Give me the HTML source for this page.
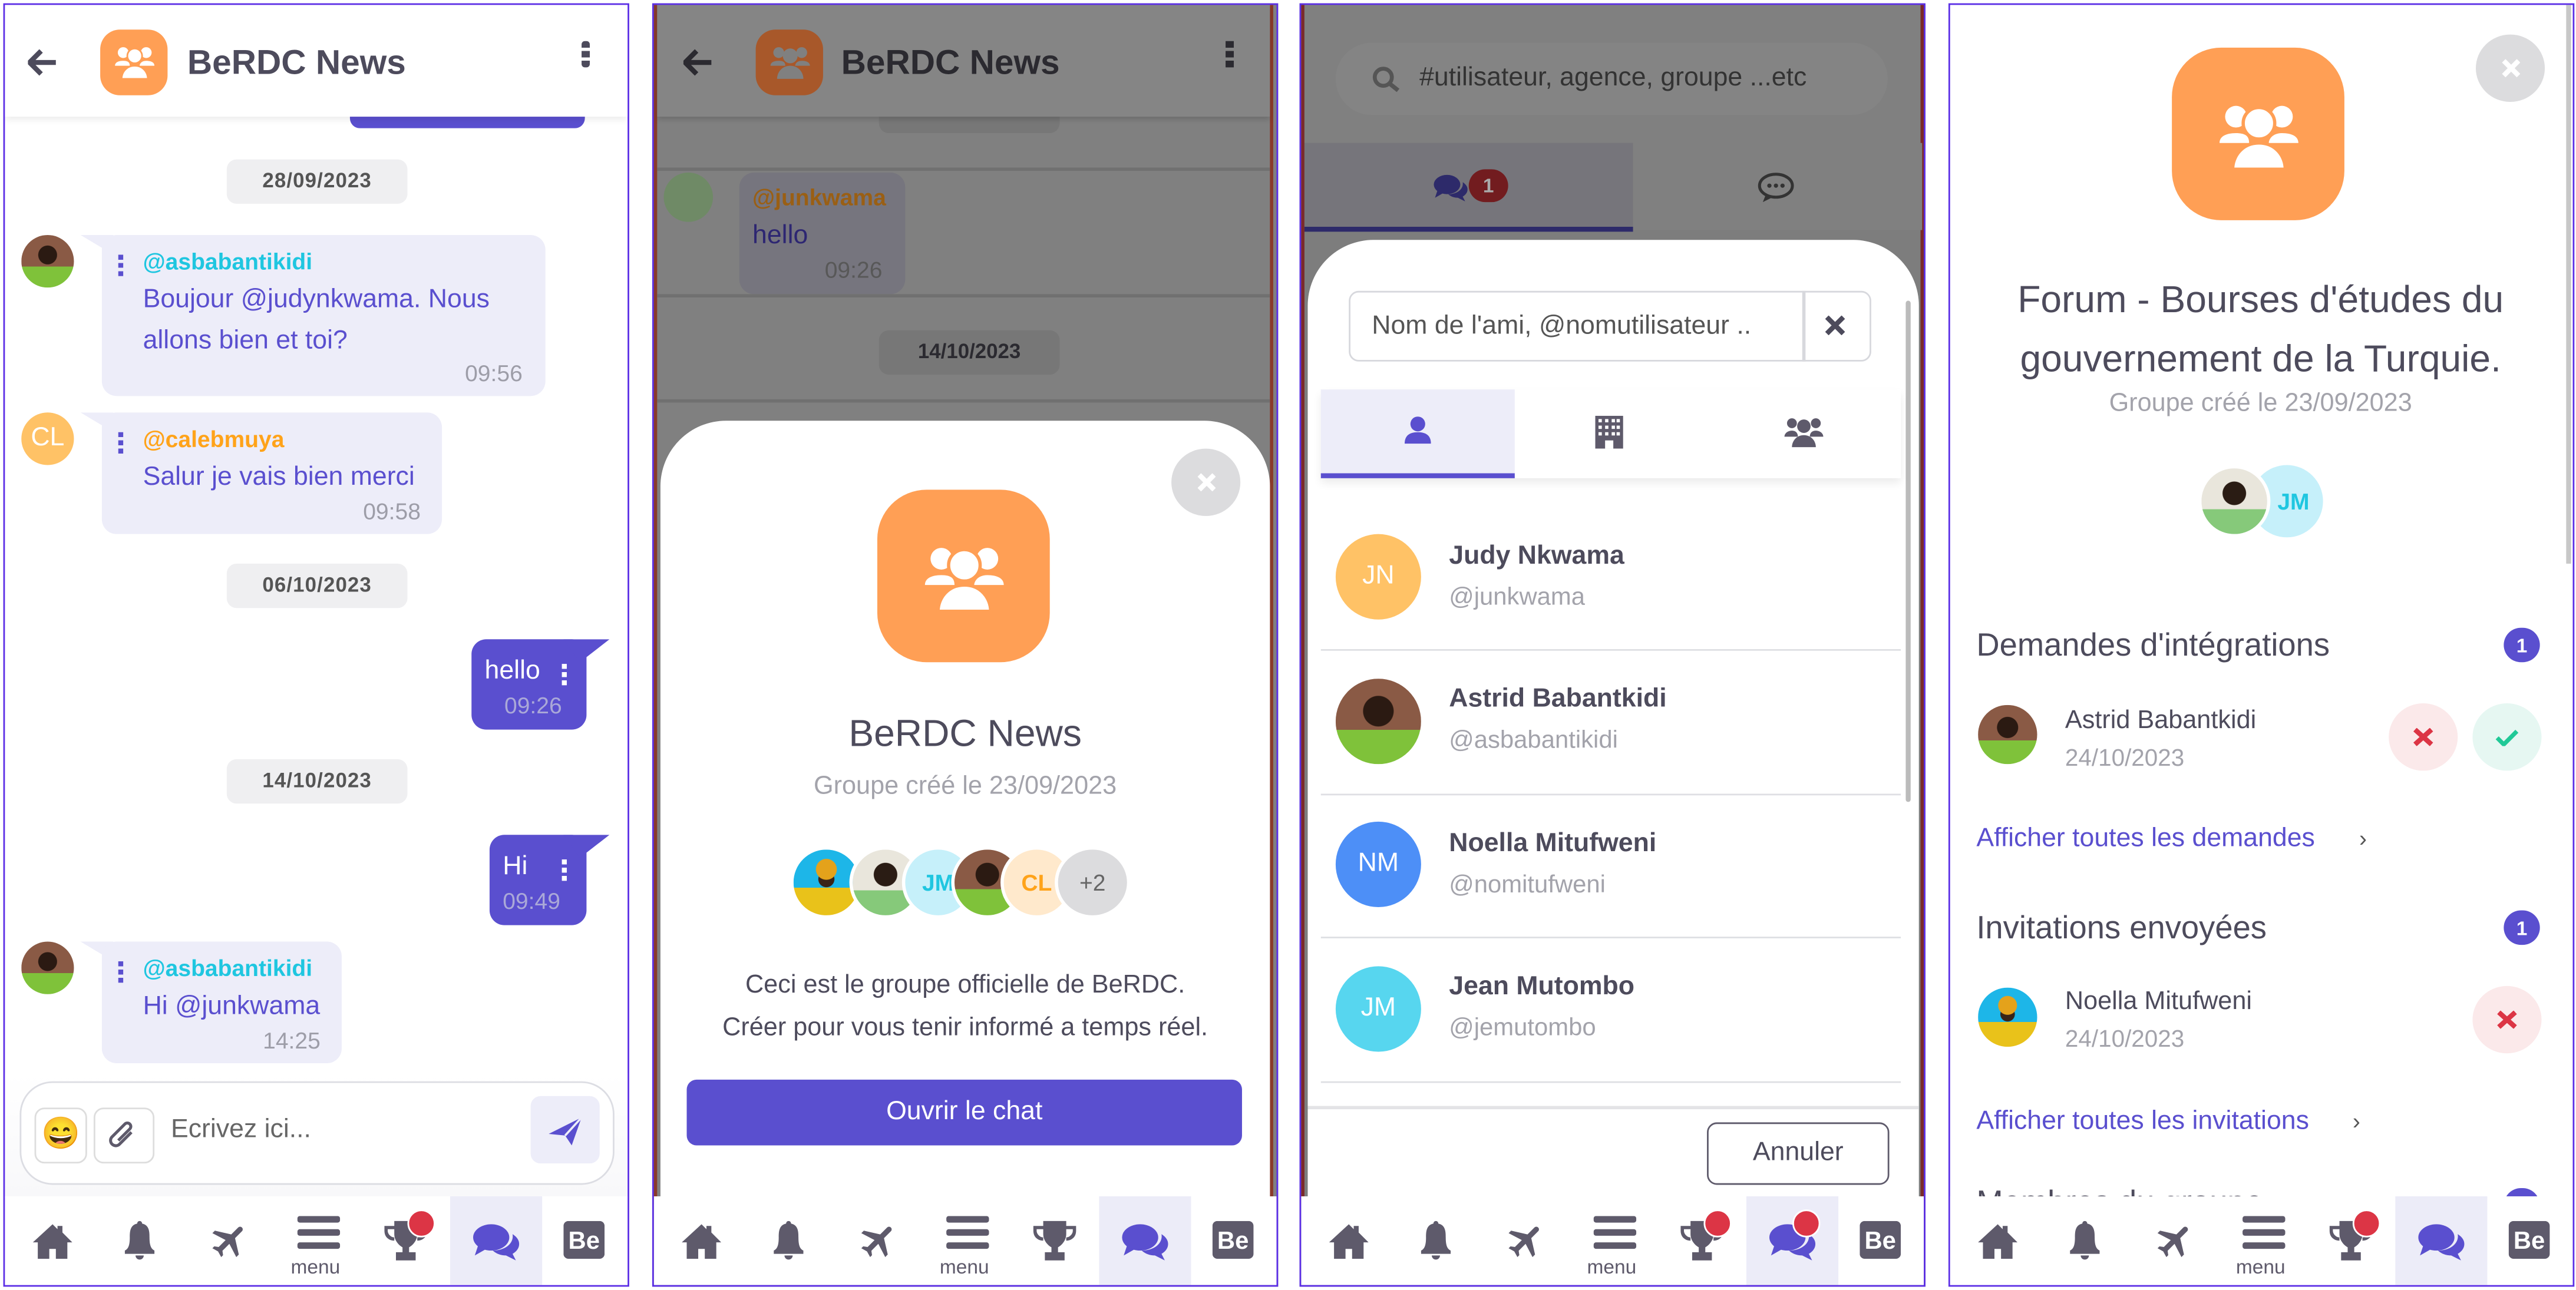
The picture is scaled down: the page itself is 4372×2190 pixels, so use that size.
<!DOCTYPE html>
<html><head><meta charset="utf-8">
<style>
*{box-sizing:border-box;margin:0;padding:0}
html,body{width:4372px;height:2190px;overflow:hidden;background:#fff}
#root{position:absolute;left:0;top:0;width:1568px;height:785px;transform:scale(2.7883,2.7898);transform-origin:0 0;font-family:"Liberation Sans",Arial,sans-serif}
.p{position:absolute;top:2px;width:381px;height:781px;border:1.5px solid #5b2ee6;overflow:hidden;background:#fff}
.a{position:absolute}
.nav{position:absolute;left:0;right:0;bottom:0;height:54px;background:#fff}
.nav svg{position:absolute;fill:#5e5a6b}
.dot{position:absolute;width:16px;height:16px;border-radius:50%;background:#dc3545}
.date{position:absolute;height:27px;width:110px;border-radius:6px;background:#efeff1;color:#555;font-weight:bold;font-size:12.5px;text-align:center;line-height:27px;letter-spacing:.4px}
.bub{position:absolute;background:#ededf9;border-radius:9px}
.kb{position:absolute;width:3px;height:13px;background:linear-gradient(#5a4fcf 0 3px,transparent 3px 5px,#5a4fcf 5px 8px,transparent 8px 10px,#5a4fcf 10px 13px)}
.un{position:absolute;font-weight:bold;font-size:14px}
.tx{position:absolute;color:#5a4fcf;font-size:16px;line-height:25px}
.tm{position:absolute;color:#9d9da8;font-size:14px}
.av{position:absolute;border-radius:50%;overflow:hidden}
.ph1{background:radial-gradient(circle at 50% 38%,#2b1a12 0 22%,transparent 23%),linear-gradient(#8a5a45 0 60%,#7fc23a 60%)}
.ph2{background:radial-gradient(circle at 50% 38%,#2a1c14 0 22%,transparent 23%),linear-gradient(#e9e6dc 0 62%,#86c97a 62%)}
.ph3{background:radial-gradient(circle at 50% 30%,#e4a21b 0 18%,transparent 19%),radial-gradient(circle at 50% 45%,#3a2418 0 16%,transparent 17%),linear-gradient(#1db6e8 0 58%,#e9c21a 58%)}
.ini{display:flex;align-items:center;justify-content:center;font-size:16px}
</style></head><body><div id="root">

<!-- ============ PANEL 1 ============ -->
<div class="p" style="left:2px">
 <div class="a" style="left:0;top:0;right:0;height:68px;background:#fff;box-shadow:0 2px 4px rgba(0,0,0,.08);z-index:2">
  <svg class="a" style="left:14px;top:27px" width="18" height="16" viewBox="0 0 18 16"><path d="M8 1 1 8l7 7M1 8h16" stroke="#4d4b5c" stroke-width="3" fill="none"/></svg>
  <div class="a" style="left:58px;top:15px;width:41px;height:40px;border-radius:12px;background:#ff9f55"></div>
  <svg class="a" style="left:66px;top:24px" width="26" height="22" viewBox="0 0 26 22" fill="#fff"><circle cx="6" cy="5" r="3.3"/><circle cx="20" cy="5" r="3.3"/><circle cx="13" cy="7" r="4.5" stroke="#ff9f55" stroke-width="1"/><path d="M1 13c0-2 2-3 5-3s4 1 4 3zM16 13c0-1 1-3 4-3s5 1 5 3z"/><path d="M5 21c0-4 3-8 8-8s8 4 8 8z" stroke="#ff9f55" stroke-width="1"/></svg>
  <div class="a" style="left:111px;top:24px;font-size:21px;font-weight:bold;color:#4d4b5c">BeRDC News</div>
  <div class="kb" style="left:351px;top:22px;width:5px;height:16px;background:linear-gradient(#4d4b5c 0 4px,transparent 4px 6px,#4d4b5c 6px 10px,transparent 10px 12px,#4d4b5c 12px 16px);border-radius:2px"></div>
 </div>
 <div class="a" style="left:210px;top:60px;width:143px;height:15px;background:#5a4fcf;border-radius:6px"></div>
 <div class="date" style="left:135px;top:94px">28/09/2023</div>
 <div class="av ph1" style="left:10px;top:140px;width:32px;height:32px"></div>
 <svg class="a" style="left:46px;top:140px" width="20" height="12"><path d="M0 0h20v12z" fill="#ededf9"/></svg>
 <div class="bub" style="left:59px;top:140px;width:270px;height:98px"></div>
 <div class="kb" style="left:69px;top:152px"></div>
 <div class="un" style="left:84px;top:148px;color:#1fc6e0">@asbabantikidi</div>
 <div class="tx" style="left:84px;top:167px">Boujour @judynkwama. Nous<br>allons bien et toi?</div>
 <div class="tm" style="left:280px;top:216px">09:56</div>

 <div class="av ini" style="left:10px;top:248px;width:32px;height:32px;background:#ffc266;color:#fff">CL</div>
 <svg class="a" style="left:46px;top:248px" width="20" height="12"><path d="M0 0h20v12z" fill="#ededf9"/></svg>
 <div class="bub" style="left:59px;top:248px;width:207px;height:74px"></div>
 <div class="kb" style="left:69px;top:260px"></div>
 <div class="un" style="left:84px;top:256px;color:#ffa31a">@calebmuya</div>
 <div class="tx" style="left:84px;top:275px">Salur je vais bien merci</div>
 <div class="tm" style="left:218px;top:300px">09:58</div>

 <div class="date" style="left:135px;top:340px">06/10/2023</div>
 <div class="bub" style="left:284px;top:386px;width:70px;height:55px;background:#5a4fcf"></div>
 <svg class="a" style="left:340px;top:386px" width="28" height="14"><path d="M0 0h28L10 14z" fill="#5a4fcf"/></svg>
 <div class="a" style="left:292px;top:397px;color:#fff;font-size:16px">hello</div>
 <div class="kb" style="left:339px;top:401px;background:linear-gradient(#fff 0 3px,transparent 3px 5px,#fff 5px 8px,transparent 8px 10px,#fff 10px 13px)"></div>
 <div class="a" style="left:304px;top:418px;color:#aaa8d8;font-size:14px">09:26</div>

 <div class="date" style="left:135px;top:459px">14/10/2023</div>
 <div class="bub" style="left:295px;top:505px;width:59px;height:55px;background:#5a4fcf"></div>
 <svg class="a" style="left:340px;top:505px" width="28" height="14"><path d="M0 0h28L10 14z" fill="#5a4fcf"/></svg>
 <div class="a" style="left:303px;top:516px;color:#fff;font-size:16px">Hi</div>
 <div class="kb" style="left:339px;top:520px;background:linear-gradient(#fff 0 3px,transparent 3px 5px,#fff 5px 8px,transparent 8px 10px,#fff 10px 13px)"></div>
 <div class="a" style="left:303px;top:537px;color:#aaa8d8;font-size:14px">09:49</div>

 <div class="av ph1" style="left:10px;top:570px;width:32px;height:32px"></div>
 <svg class="a" style="left:46px;top:570px" width="20" height="12"><path d="M0 0h20v12z" fill="#ededf9"/></svg>
 <div class="bub" style="left:59px;top:570px;width:146px;height:74px"></div>
 <div class="kb" style="left:69px;top:582px"></div>
 <div class="un" style="left:84px;top:578px;color:#1fc6e0">@asbabantikidi</div>
 <div class="tx" style="left:84px;top:597px">Hi @junkwama</div>
 <div class="tm" style="left:157px;top:622px">14:25</div>

 <div class="a" style="left:0;right:0;top:650px;height:76px;background:linear-gradient(#fff,#f8f8fa)"></div>
 <div class="a" style="left:9px;top:655px;width:362px;height:63px;border:1.5px solid #dcdde3;border-radius:20px;background:#fff"></div>
 <div class="a" style="left:18px;top:671px;width:32px;height:34px;border:1px solid #ddd;border-radius:6px;text-align:center;line-height:32px;font-size:19px">😄</div>
 <div class="a" style="left:54px;top:671px;width:37px;height:34px;border:1px solid #ddd;border-radius:6px"></div>
 <svg class="a" style="left:61px;top:677px" width="22" height="22" viewBox="0 0 22 22"><path d="M16 9 9 16a3 3 0 0 1-5-4l8-8a2 2 0 0 1 3 3l-7 7" stroke="#5e5a6b" stroke-width="1.8" fill="none"/></svg>
 <div class="a" style="left:101px;top:676px;font-size:16px;color:#666">Ecrivez ici...</div>
 <div class="a" style="left:320px;top:664px;width:42px;height:41px;border-radius:6px;background:#ededf9"></div>
 <svg class="a" style="left:330px;top:675px" width="22" height="20" viewBox="0 0 22 20"><path d="M1 12 21 2l-6 17-4-6z" fill="#5a4fcf"/><path d="M11 13 21 2" stroke="#ededf9" stroke-width="1.3"/></svg>

 <div class="nav">
  <svg style="left:16px;top:16px" width="26" height="22" viewBox="0 0 26 22"><path d="M13 1 1 12h3v10h7v-6h4v6h7V12h3L19 6V2h-3v2z"/></svg>
  <svg style="left:71px;top:14px" width="22" height="26" viewBox="0 0 22 26"><path d="M11 1c1 0 1.5.8 1.5 1.6C17 3.5 17 8 17 11c0 5 1 7 3 8v2H2v-2c2-1 3-3 3-8 0-3 0-7.5 4.5-8.4C9.5 1.8 10 1 11 1zM8.5 22h5a2.5 2.5 0 0 1-5 0z"/></svg>
  <svg style="left:124px;top:14px" width="26" height="26" viewBox="0 0 24 24"><path transform="rotate(45 12 12)" d="M21 16v-2l-8-5V3.5a1.5 1.5 0 0 0-3 0V9l-8 5v2l8-2.5V19l-2 1.5V22l3.5-1 3.5 1v-1.5L13 19v-5.5z"/></svg>
  <svg style="left:178px;top:12px" width="26" height="20" viewBox="0 0 26 20"><rect y="0" width="26" height="4" rx="1.5"/><rect y="8" width="26" height="4" rx="1.5"/><rect y="16" width="26" height="4" rx="1.5"/></svg>
  <div class="a" style="left:174px;top:36px;font-size:12px;color:#5e5a6b">menu</div>
  <svg style="left:230px;top:14px" width="28" height="26" viewBox="0 0 28 26"><path d="M7 1h14v8c0 4-3 7-5 8v3h4v5H8v-5h4v-3c-2-1-5-4-5-8zM7 4H1v3c0 4 3 6 6 6v-2c-2 0-4-2-4-4V6h4zM21 4h6v3c0 4-3 6-6 6v-2c2 0 4-2 4-4V6h-4z"/></svg>
  <div class="dot" style="left:245px;top:8px;width:17px;height:17px;border:1.5px solid #fff"></div>
  <div class="a" style="left:271px;top:0;width:56px;height:54px;background:#ececf8"></div>
  <svg style="left:284px;top:16px;fill:#5a4fcf" width="30" height="24" viewBox="0 0 30 24"><ellipse cx="12" cy="9" rx="11" ry="8"/><path d="M4 14 2 20l7-4z"/><path d="M25 7c3 2 4 4 4 6 0 2.5-1.5 4.5-4 6l2 4-6-3c-3 0-6-1-8-3 7 0 13-4 12-10z"/></svg>
  <svg style="left:340px;top:15px" width="25" height="23" viewBox="0 0 25 23"><rect width="25" height="23" rx="3"/><text x="12.5" y="17" font-family="Liberation Sans" font-weight="bold" font-size="15" fill="#fff" text-anchor="middle">Be</text></svg>
 </div>
</div>

<!-- ============ PANEL 2 ============ -->
<div class="p" style="left:397px;background:#808080">
 <div class="a" style="left:0;top:0;width:2px;height:730px;background:#8a3a2a"></div>
 <div class="a" style="right:2px;top:0;width:2px;height:730px;background:#8a3a2a"></div>
 <div class="a" style="left:137px;top:56px;width:110px;height:22px;border-radius:6px;background:#777"></div>
 <div class="a" style="left:2px;right:4px;top:0;height:68px;background:#858585;box-shadow:0 2px 3px rgba(0,0,0,.15)">
  <svg class="a" style="left:16px;top:27px" width="18" height="16" viewBox="0 0 18 16"><path d="M8 1 1 8l7 7M1 8h16" stroke="#2b2a30" stroke-width="3" fill="none"/></svg>
  <div class="a" style="left:60px;top:15px;width:41px;height:40px;border-radius:12px;background:#a8582a"></div>
  <svg class="a" style="left:68px;top:24px" width="26" height="22" viewBox="0 0 26 22" fill="#808080"><circle cx="6" cy="5" r="3.3"/><circle cx="20" cy="5" r="3.3"/><circle cx="13" cy="7" r="4.5"/><path d="M5 21c0-4 3-8 8-8s8 4 8 8z"/><path d="M1 13c0-2 2-3 5-3s4 1 4 3zM16 13c0-1 1-3 4-3s5 1 5 3z"/></svg>
  <div class="a" style="left:112px;top:24px;font-size:21px;font-weight:bold;color:#2b2a30">BeRDC News</div>
  <div class="a" style="left:346px;top:22px;width:5px;height:16px;background:linear-gradient(#2b2a30 0 4px,transparent 4px 6px,#2b2a30 6px 10px,transparent 10px 12px,#2b2a30 12px 16px)"></div>
 </div>
 <div class="a" style="left:2px;right:4px;top:99px;height:1.5px;background:#707070"></div>
 <div class="a" style="left:6px;top:102px;width:30px;height:30px;border-radius:50%;background:#6f8a66"></div>
 <div class="a" style="left:52px;top:102px;width:101px;height:74px;border-radius:9px;background:#76757e"></div>
 <div class="a" style="left:60px;top:109px;color:#9a5f14;font-weight:bold;font-size:14px">@junkwama</div>
 <div class="a" style="left:60px;top:132px;color:#2d2672;font-size:16px">hello</div>
 <div class="a" style="left:104px;top:153px;color:#585858;font-size:14px">09:26</div>
 <div class="a" style="left:2px;right:4px;top:176px;height:1.5px;background:#707070"></div>
 <div class="a" style="left:137px;top:198px;width:110px;height:27px;border-radius:6px;background:#777;color:#2b2a30;font-weight:bold;font-size:12.5px;text-align:center;line-height:27px">14/10/2023</div>
 <div class="a" style="left:2px;right:4px;top:240px;height:1.5px;background:#707070"></div>

 <div class="a" style="left:4px;top:253px;width:371px;height:480px;background:#fff;border-radius:40px 40px 0 0"></div>
 <div class="a" style="left:315px;top:270px;width:42px;height:41px;border-radius:50%;background:#dcdcde"></div>
 <svg class="a" style="left:331px;top:285px" width="11" height="11"><path d="M1 1l9 9M10 1l-9 9" stroke="#fff" stroke-width="3"/></svg>
 <div class="a" style="left:136px;top:295px;width:105px;height:105px;border-radius:30px;background:#ff9f55"></div>
 <svg class="a" style="left:163px;top:327px" width="52" height="44" viewBox="0 0 26 22" fill="#fff"><circle cx="6" cy="5" r="3.3"/><circle cx="20" cy="5" r="3.3"/><path d="M1 13c0-2 2-3 5-3s4 1 4 3zM16 13c0-1 1-3 4-3s5 1 5 3z"/><circle cx="13" cy="7" r="4.8" stroke="#ff9f55" stroke-width="1"/><path d="M5 21c0-4 3-8 8-8s8 4 8 8z" stroke="#ff9f55" stroke-width="1"/></svg>
 <div class="a" style="left:4px;width:371px;top:430px;text-align:center;font-size:23px;color:#4d4b5c">BeRDC News</div>
 <div class="a" style="left:4px;width:371px;top:467px;text-align:center;font-size:15.5px;color:#a3a3ab">Groupe créé le 23/09/2023</div>
 <div class="av ph3" style="left:83px;top:512px;width:44px;height:44px;border:2px solid #fff"></div>
 <div class="av ph2" style="left:119px;top:512px;width:44px;height:44px;border:2px solid #fff"></div>
 <div class="av ini" style="left:151px;top:512px;width:44px;height:44px;border:2px solid #fff;background:#c6f0fa;color:#1fc6e0;font-weight:bold;font-size:14px">JM</div>
 <div class="av ph1" style="left:181px;top:512px;width:44px;height:44px;border:2px solid #fff"></div>
 <div class="av ini" style="left:211px;top:512px;width:44px;height:44px;border:2px solid #fff;background:#ffe9cc;color:#ffa31a;font-weight:bold;font-size:14px">CL</div>
 <div class="av ini" style="left:244px;top:512px;width:46px;height:44px;border:2px solid #fff;background:#dcdcde;color:#666;font-size:14px">+2</div>
 <div class="a" style="left:4px;width:371px;top:584px;text-align:center;font-size:15.5px;color:#4d4b5c;line-height:26px">Ceci est le groupe officielle de BeRDC.<br>Créer pour vous tenir informé a temps réel.</div>
 <div class="a" style="left:20px;top:654px;width:338px;height:40px;border-radius:6px;background:#5a4fcf;color:#fff;font-size:16px;text-align:center;line-height:40px">Ouvrir le chat</div>

 <div class="nav">
  <svg style="left:16px;top:16px" width="26" height="22" viewBox="0 0 26 22"><path d="M13 1 1 12h3v10h7v-6h4v6h7V12h3L19 6V2h-3v2z"/></svg>
  <svg style="left:71px;top:14px" width="22" height="26" viewBox="0 0 22 26"><path d="M11 1c1 0 1.5.8 1.5 1.6C17 3.5 17 8 17 11c0 5 1 7 3 8v2H2v-2c2-1 3-3 3-8 0-3 0-7.5 4.5-8.4C9.5 1.8 10 1 11 1zM8.5 22h5a2.5 2.5 0 0 1-5 0z"/></svg>
  <svg style="left:124px;top:14px" width="26" height="26" viewBox="0 0 24 24"><path transform="rotate(45 12 12)" d="M21 16v-2l-8-5V3.5a1.5 1.5 0 0 0-3 0V9l-8 5v2l8-2.5V19l-2 1.5V22l3.5-1 3.5 1v-1.5L13 19v-5.5z"/></svg>
  <svg style="left:178px;top:12px" width="26" height="20" viewBox="0 0 26 20"><rect y="0" width="26" height="4" rx="1.5"/><rect y="8" width="26" height="4" rx="1.5"/><rect y="16" width="26" height="4" rx="1.5"/></svg>
  <div class="a" style="left:174px;top:36px;font-size:12px;color:#5e5a6b">menu</div>
  <svg style="left:230px;top:14px" width="28" height="26" viewBox="0 0 28 26"><path d="M7 1h14v8c0 4-3 7-5 8v3h4v5H8v-5h4v-3c-2-1-5-4-5-8zM7 4H1v3c0 4 3 6 6 6v-2c-2 0-4-2-4-4V6h4zM21 4h6v3c0 4-3 6-6 6v-2c2 0 4-2 4-4V6h-4z"/></svg>
  <div class="a" style="left:271px;top:0;width:56px;height:54px;background:#ececf8"></div>
  <svg style="left:284px;top:16px;fill:#5a4fcf" width="30" height="24" viewBox="0 0 30 24"><ellipse cx="12" cy="9" rx="11" ry="8"/><path d="M4 14 2 20l7-4z"/><path d="M25 7c3 2 4 4 4 6 0 2.5-1.5 4.5-4 6l2 4-6-3c-3 0-6-1-8-3 7 0 13-4 12-10z"/></svg>
  <svg style="left:340px;top:15px" width="25" height="23" viewBox="0 0 25 23"><rect width="25" height="23" rx="3"/><text x="12.5" y="17" font-family="Liberation Sans" font-weight="bold" font-size="15" fill="#fff" text-anchor="middle">Be</text></svg>
 </div>
</div>

<!-- ============ PANEL 3 ============ -->
<div class="p" style="left:791px;background:#7d7d7d">
 <div class="a" style="left:0;top:0;width:2px;height:730px;background:#7a2a2a"></div>
 <div class="a" style="right:0;top:0;width:2px;height:730px;background:#7a2a2a"></div>
 <div class="a" style="left:2px;right:2px;top:0;height:84px;background:#808080"></div>
 <div class="a" style="left:21px;top:23px;width:336px;height:44px;border-radius:22px;background:#848484"></div>
 <svg class="a" style="left:43px;top:37px" width="18" height="16" viewBox="0 0 18 16"><circle cx="7" cy="7" r="5.2" stroke="#555" stroke-width="2.4" fill="none"/><path d="M11 11l5 4" stroke="#555" stroke-width="2.6"/></svg>
 <div class="a" style="left:72px;top:36px;font-size:16px;color:#333">#utilisateur, agence, groupe ...etc</div>
 <div class="a" style="left:2px;top:84px;width:200px;height:53px;background:#76757b"></div>
 <div class="a" style="left:202px;top:84px;width:176px;height:53px;background:#808080"></div>
 <div class="a" style="left:2px;top:135px;width:200px;height:3px;background:#2d2a6a"></div>
 <svg class="a" style="left:80px;top:102px" width="22" height="19" viewBox="0 0 30 24" fill="#2d2a6a"><ellipse cx="12" cy="9" rx="11" ry="8"/><path d="M4 14 2 20l7-4z"/><path d="M25 7c3 2 4 4 4 6 0 2.5-1.5 4.5-4 6l2 4-6-3c-3 0-6-1-8-3 7 0 13-4 12-10z"/></svg>
 <div class="a ini" style="left:102px;top:100px;width:24px;height:20px;border-radius:10px;background:#721c1f;color:#aaa;font-size:12px;font-weight:bold">1</div>
 <svg class="a" style="left:278px;top:102px" width="22" height="19" viewBox="0 0 22 19"><ellipse cx="11" cy="8" rx="10" ry="7" stroke="#333" stroke-width="1.8" fill="none"/><path d="M5 13l-2 5 6-3" fill="#333"/><circle cx="7" cy="8" r="1.3" fill="#333"/><circle cx="11" cy="8" r="1.3" fill="#333"/><circle cx="15" cy="8" r="1.3" fill="#333"/></svg>

 <div class="a" style="left:4px;top:143px;width:372px;height:600px;background:#fff;border-radius:40px 40px 0 0"></div>
 <div class="a" style="left:368px;top:180px;width:3px;height:305px;background:#bbb;border-radius:2px"></div>
 <div class="a" style="left:29px;top:174px;width:318px;height:43px;border:1.5px solid #d7d8dd;border-radius:6px"></div>
 <div class="a" style="left:305px;top:174px;width:1.5px;height:43px;background:#d7d8dd"></div>
 <svg class="a" style="left:319px;top:189px" width="12" height="12"><path d="M1 1l10 10M11 1 1 11" stroke="#4d4b5c" stroke-width="3"/></svg>
 <div class="a" style="left:43px;top:187px;font-size:16px;color:#555">Nom de l'ami, @nomutilisateur ..</div>
 <div class="a" style="left:12px;top:234px;width:353px;height:54px;background:#fff;box-shadow:0 3px 5px rgba(0,0,0,.08)"></div>
 <div class="a" style="left:12px;top:234px;width:118px;height:54px;background:#ededf9"></div>
 <div class="a" style="left:12px;top:285px;width:118px;height:3px;background:#5a4fcf"></div>
 <svg class="a" style="left:63px;top:250px" width="16" height="17" viewBox="0 0 16 17" fill="#5a4fcf"><circle cx="8" cy="5" r="4.5"/><path d="M0 17c0-5 3-7 8-7s8 2 8 7z"/></svg>
 <svg class="a" style="left:179px;top:250px" width="17" height="20" viewBox="0 0 17 20"><rect width="17" height="20" fill="#5e5a6b"/><g fill="#fff"><rect x="2" y="2" width="2" height="2"/><rect x="6" y="2" width="2" height="2"/><rect x="10" y="2" width="2" height="2"/><rect x="13" y="2" width="2" height="2"/><rect x="2" y="6" width="2" height="2"/><rect x="6" y="6" width="2" height="2"/><rect x="10" y="6" width="2" height="2"/><rect x="13" y="6" width="2" height="2"/><rect x="2" y="10" width="2" height="2"/><rect x="6" y="10" width="2" height="2"/><rect x="10" y="10" width="2" height="2"/><rect x="13" y="10" width="2" height="2"/><rect x="6" y="15" width="5" height="5"/></g></svg>
 <svg class="a" style="left:294px;top:250px" width="24" height="20" viewBox="0 0 26 22" fill="#5e5a6b"><circle cx="5" cy="5" r="3.3"/><circle cx="21" cy="5" r="3.3"/><path d="M0 14c0-2 2-4 5-4s4 2 4 4zM17 14c0-2 1-4 4-4s5 2 5 4z"/><circle cx="13" cy="7" r="4.5"/><path d="M5 21c0-4 3-8 8-8s8 4 8 8z"/></svg>

 <div class="av ini" style="left:21px;top:322px;width:52px;height:52px;background:#ffc266;color:#fff">JN</div>
 <div class="a" style="left:90px;top:327px;font-size:16px;font-weight:bold;color:#4d4b5c">Judy Nkwama</div>
 <div class="a" style="left:90px;top:352px;font-size:15px;color:#a3a3ab">@junkwama</div>
 <div class="a" style="left:12px;top:392px;width:353px;height:1px;background:#dedfe3"></div>
 <div class="av ph1" style="left:21px;top:410px;width:52px;height:52px"></div>
 <div class="a" style="left:90px;top:414px;font-size:16px;font-weight:bold;color:#4d4b5c">Astrid Babantkidi</div>
 <div class="a" style="left:90px;top:439px;font-size:15px;color:#a3a3ab">@asbabantikidi</div>
 <div class="a" style="left:12px;top:480px;width:353px;height:1px;background:#dedfe3"></div>
 <div class="av ini" style="left:21px;top:497px;width:52px;height:52px;background:#4d8ff7;color:#fff">NM</div>
 <div class="a" style="left:90px;top:502px;font-size:16px;font-weight:bold;color:#4d4b5c">Noella Mitufweni</div>
 <div class="a" style="left:90px;top:527px;font-size:15px;color:#a3a3ab">@nomitufweni</div>
 <div class="a" style="left:12px;top:567px;width:353px;height:1px;background:#dedfe3"></div>
 <div class="av ini" style="left:21px;top:585px;width:52px;height:52px;background:#57d6ef;color:#fff">JM</div>
 <div class="a" style="left:90px;top:589px;font-size:16px;font-weight:bold;color:#4d4b5c">Jean Mutombo</div>
 <div class="a" style="left:90px;top:614px;font-size:15px;color:#a3a3ab">@jemutombo</div>
 <div class="a" style="left:12px;top:655px;width:353px;height:1px;background:#dedfe3"></div>
 <div class="a" style="left:4px;top:670px;width:372px;height:1.5px;background:#e3e3e6"></div>
 <div class="a" style="left:247px;top:680px;width:111px;height:38px;border:1.2px solid #5e5a6b;border-radius:6px;text-align:center;line-height:36px;font-size:16px;color:#4d4b5c">Annuler</div>

 <div class="nav">
  <svg style="left:16px;top:16px" width="26" height="22" viewBox="0 0 26 22"><path d="M13 1 1 12h3v10h7v-6h4v6h7V12h3L19 6V2h-3v2z"/></svg>
  <svg style="left:71px;top:14px" width="22" height="26" viewBox="0 0 22 26"><path d="M11 1c1 0 1.5.8 1.5 1.6C17 3.5 17 8 17 11c0 5 1 7 3 8v2H2v-2c2-1 3-3 3-8 0-3 0-7.5 4.5-8.4C9.5 1.8 10 1 11 1zM8.5 22h5a2.5 2.5 0 0 1-5 0z"/></svg>
  <svg style="left:124px;top:14px" width="26" height="26" viewBox="0 0 24 24"><path transform="rotate(45 12 12)" d="M21 16v-2l-8-5V3.5a1.5 1.5 0 0 0-3 0V9l-8 5v2l8-2.5V19l-2 1.5V22l3.5-1 3.5 1v-1.5L13 19v-5.5z"/></svg>
  <svg style="left:178px;top:12px" width="26" height="20" viewBox="0 0 26 20"><rect y="0" width="26" height="4" rx="1.5"/><rect y="8" width="26" height="4" rx="1.5"/><rect y="16" width="26" height="4" rx="1.5"/></svg>
  <div class="a" style="left:174px;top:36px;font-size:12px;color:#5e5a6b">menu</div>
  <svg style="left:230px;top:14px" width="28" height="26" viewBox="0 0 28 26"><path d="M7 1h14v8c0 4-3 7-5 8v3h4v5H8v-5h4v-3c-2-1-5-4-5-8zM7 4H1v3c0 4 3 6 6 6v-2c-2 0-4-2-4-4V6h4zM21 4h6v3c0 4-3 6-6 6v-2c2 0 4-2 4-4V6h-4z"/></svg>
  <div class="dot" style="left:245px;top:8px;width:17px;height:17px;border:1.5px solid #fff"></div>
  <div class="a" style="left:271px;top:0;width:56px;height:54px;background:#ececf8"></div>
  <svg style="left:284px;top:16px;fill:#5a4fcf" width="30" height="24" viewBox="0 0 30 24"><ellipse cx="12" cy="9" rx="11" ry="8"/><path d="M4 14 2 20l7-4z"/><path d="M25 7c3 2 4 4 4 6 0 2.5-1.5 4.5-4 6l2 4-6-3c-3 0-6-1-8-3 7 0 13-4 12-10z"/></svg>
  <div class="dot" style="left:299px;top:8px;width:17px;height:17px;border:1.5px solid #fff"></div>
  <svg style="left:340px;top:15px" width="25" height="23" viewBox="0 0 25 23"><rect width="25" height="23" rx="3"/><text x="12.5" y="17" font-family="Liberation Sans" font-weight="bold" font-size="15" fill="#fff" text-anchor="middle">Be</text></svg>
 </div>
</div>

<!-- ============ PANEL 4 ============ -->
<div class="p" style="left:1186px">
 <div class="a" style="right:1px;top:0;width:3px;height:340px;background:#c8c8c8"></div>
 <div class="a" style="left:320px;top:18px;width:42px;height:41px;border-radius:50%;background:#dcdcde"></div>
 <svg class="a" style="left:336px;top:33px" width="11" height="11"><path d="M1 1l9 9M10 1l-9 9" stroke="#fff" stroke-width="3"/></svg>
 <div class="a" style="left:135px;top:26px;width:105px;height:105px;border-radius:30px;background:#ff9f55"></div>
 <svg class="a" style="left:162px;top:58px" width="52" height="44" viewBox="0 0 26 22" fill="#fff"><circle cx="6" cy="5" r="3.3"/><circle cx="20" cy="5" r="3.3"/><path d="M1 13c0-2 2-3 5-3s4 1 4 3zM16 13c0-1 1-3 4-3s5 1 5 3z"/><circle cx="13" cy="7" r="4.8" stroke="#ff9f55" stroke-width="1"/><path d="M5 21c0-4 3-8 8-8s8 4 8 8z" stroke="#ff9f55" stroke-width="1"/></svg>
 <div class="a" style="left:0;width:378px;top:161px;text-align:center;font-size:23px;line-height:36px;color:#4d4b5c">Forum - Bourses d'études du<br>gouvernement de la Turquie.</div>
 <div class="a" style="left:0;width:378px;top:234px;text-align:center;font-size:15.5px;color:#a3a3ab">Groupe créé le 23/09/2023</div>
 <div class="av ini" style="left:183px;top:280px;width:44px;height:44px;background:#c6f0fa;color:#1fc6e0;font-weight:bold;font-size:14px;padding-left:8px">JM</div>
 <div class="av ph2" style="left:151px;top:280px;width:44px;height:44px;border:2px solid #fff"></div>

 <div class="a" style="left:16px;top:379px;font-size:19.5px;color:#4d4b5c">Demandes d'intégrations</div>
 <div class="a ini" style="left:337px;top:379px;width:22px;height:21px;border-radius:11px;background:#5a4fcf;color:#fff;font-size:12px;font-weight:bold">1</div>
 <div class="av ph1" style="left:17px;top:426px;width:36px;height:36px"></div>
 <div class="a" style="left:70px;top:427px;font-size:15.5px;color:#4d4b5c">Astrid Babantkidi</div>
 <div class="a" style="left:70px;top:451px;font-size:14.5px;color:#a3a3ab">24/10/2023</div>
 <div class="a" style="left:267px;top:425px;width:42px;height:41px;border-radius:50%;background:#fbe9ea"></div>
 <svg class="a" style="left:282px;top:440px" width="12" height="11"><path d="M1 1l10 9M11 1 1 10" stroke="#dc3545" stroke-width="3"/></svg>
 <div class="a" style="left:318px;top:425px;width:42px;height:41px;border-radius:50%;background:#e6f7f2"></div>
 <svg class="a" style="left:332px;top:440px" width="14" height="11"><path d="M1 6l4 4 8-8" stroke="#20c997" stroke-width="2.6" fill="none"/></svg>
 <div class="a" style="left:16px;top:499px;font-size:16px;color:#5a4fcf">Afficher toutes les demandes</div>
 <div class="a" style="left:249px;top:499px;font-size:14px;color:#555">›</div>

 <div class="a" style="left:16px;top:551px;font-size:19.5px;color:#4d4b5c">Invitations envoyées</div>
 <div class="a ini" style="left:337px;top:551px;width:22px;height:21px;border-radius:11px;background:#5a4fcf;color:#fff;font-size:12px;font-weight:bold">1</div>
 <div class="av ph3" style="left:17px;top:598px;width:36px;height:36px"></div>
 <div class="a" style="left:70px;top:598px;font-size:15.5px;color:#4d4b5c">Noella Mitufweni</div>
 <div class="a" style="left:70px;top:622px;font-size:14.5px;color:#a3a3ab">24/10/2023</div>
 <div class="a" style="left:318px;top:597px;width:42px;height:41px;border-radius:50%;background:#fbe9ea"></div>
 <svg class="a" style="left:333px;top:612px" width="12" height="11"><path d="M1 1l10 9M11 1 1 10" stroke="#dc3545" stroke-width="3"/></svg>
 <div class="a" style="left:16px;top:671px;font-size:16px;color:#5a4fcf">Afficher toutes les invitations</div>
 <div class="a" style="left:245px;top:671px;font-size:14px;color:#555">›</div>
 <div class="a" style="left:16px;top:718px;font-size:19.5px;color:#4d4b5c">Membres du groupe</div>
 <div class="a" style="left:337px;top:720px;width:22px;height:21px;border-radius:11px;background:#5a4fcf"></div>

 <div class="nav">
  <svg style="left:16px;top:16px" width="26" height="22" viewBox="0 0 26 22"><path d="M13 1 1 12h3v10h7v-6h4v6h7V12h3L19 6V2h-3v2z"/></svg>
  <svg style="left:71px;top:14px" width="22" height="26" viewBox="0 0 22 26"><path d="M11 1c1 0 1.5.8 1.5 1.6C17 3.5 17 8 17 11c0 5 1 7 3 8v2H2v-2c2-1 3-3 3-8 0-3 0-7.5 4.5-8.4C9.5 1.8 10 1 11 1zM8.5 22h5a2.5 2.5 0 0 1-5 0z"/></svg>
  <svg style="left:124px;top:14px" width="26" height="26" viewBox="0 0 24 24"><path transform="rotate(45 12 12)" d="M21 16v-2l-8-5V3.5a1.5 1.5 0 0 0-3 0V9l-8 5v2l8-2.5V19l-2 1.5V22l3.5-1 3.5 1v-1.5L13 19v-5.5z"/></svg>
  <svg style="left:178px;top:12px" width="26" height="20" viewBox="0 0 26 20"><rect y="0" width="26" height="4" rx="1.5"/><rect y="8" width="26" height="4" rx="1.5"/><rect y="16" width="26" height="4" rx="1.5"/></svg>
  <div class="a" style="left:174px;top:36px;font-size:12px;color:#5e5a6b">menu</div>
  <svg style="left:230px;top:14px" width="28" height="26" viewBox="0 0 28 26"><path d="M7 1h14v8c0 4-3 7-5 8v3h4v5H8v-5h4v-3c-2-1-5-4-5-8zM7 4H1v3c0 4 3 6 6 6v-2c-2 0-4-2-4-4V6h4zM21 4h6v3c0 4-3 6-6 6v-2c2 0 4-2 4-4V6h-4z"/></svg>
  <div class="dot" style="left:245px;top:8px;width:17px;height:17px;border:1.5px solid #fff"></div>
  <div class="a" style="left:271px;top:0;width:56px;height:54px;background:#ececf8"></div>
  <svg style="left:284px;top:16px;fill:#5a4fcf" width="30" height="24" viewBox="0 0 30 24"><ellipse cx="12" cy="9" rx="11" ry="8"/><path d="M4 14 2 20l7-4z"/><path d="M25 7c3 2 4 4 4 6 0 2.5-1.5 4.5-4 6l2 4-6-3c-3 0-6-1-8-3 7 0 13-4 12-10z"/></svg>
  <svg style="left:340px;top:15px" width="25" height="23" viewBox="0 0 25 23"><rect width="25" height="23" rx="3"/><text x="12.5" y="17" font-family="Liberation Sans" font-weight="bold" font-size="15" fill="#fff" text-anchor="middle">Be</text></svg>
 </div>
</div>

</div></body></html>
